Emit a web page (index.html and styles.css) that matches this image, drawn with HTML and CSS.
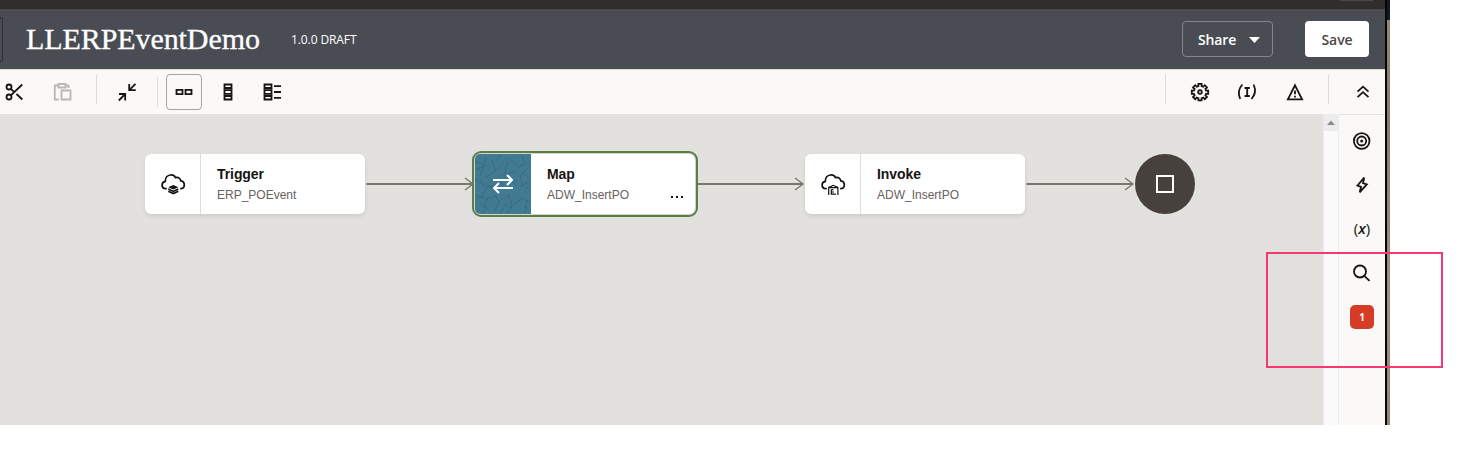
FILE: index.html
```html
<!DOCTYPE html>
<html lang="en">
<head>
<meta charset="utf-8">
<title>LLERPEventDemo</title>
<link rel="stylesheet" href="styles.css">
</head>
<body>
<div class="window">
  <div class="app">
    <div class="topstrip"><span class="topstrip-tab"></span></div>
    <header class="header">
      <span class="back"></span>
      <h1 class="title">LLERPEventDemo</h1>
      <span class="version">1.0.0 DRAFT</span>
      <button class="btn share">Share <svg width="11" height="6"><path d="M0 0h11L5.500 6z" fill="#fff"/></svg></button>
      <button class="btn save">Save</button>
    </header>
    <nav class="toolbar">
      <span class="tool cut"><svg class="ico" viewBox="0 0 24 24"><circle cx="7" cy="7" r="2.500"/><circle cx="7" cy="17" r="2.500"/><path d="M8.800 15.300 20.300 4.500M8.800 8.800l3 2.900M14.500 14l5.800 5.500"/></svg></span>
      <span class="tool paste"><svg class="ico muted" viewBox="0 0 24 24"><path d="M8.500 5.500H4.800v14h4M15.500 5.500h3v2.500M8.500 4h7v3.500h-7zM11.500 10.500h9v9h-9z"/></svg></span>
      <i class="divider d1"></i>
      <span class="tool collapse"><svg class="ico" viewBox="0 0 24 24"><path d="M20.500 3.800 14.200 10.100M14.200 4v6.200h6.500M3.800 20.500l6.300-6.300M4 14h6.200v6.500"/></svg></span>
      <i class="divider d2"></i>
      <span class="tool active"><svg class="ico" viewBox="0 0 24 24"><path d="M4.500 9.900h6v4.200h-6zM13.500 9.900h6v4.200h-6z"/></svg></span>
      <span class="tool gap8"><svg class="ico" viewBox="0 0 24 24"><path d="M8.500 4.500h7V8h-7zM8.500 10.200h7v3.600h-7zM8.500 16h7v3.500h-7z"/><path class="link" d="M8.500 8v2.200M15.500 8v2.200M8.500 13.800V16M15.500 13.800V16"/></svg></span>
      <span class="tool gap8"><svg class="ico" viewBox="0 0 24 24"><path d="M4.500 4.500h7V8h-7zM4.500 10.200h7v3.600h-7zM4.500 16h7v3.500h-7zM14 6.200h7M14 12h7M14 17.800h7"/><path class="link" d="M4.500 8v2.200M11.500 8v2.200M4.500 13.800V16M11.500 13.800V16"/></svg></span>
      <i class="divider d3"></i>
      <span class="tool gear"><svg class="ico" viewBox="0 0 24 24"><path d="M10.400 3.900h3.200v2.200l1.600.7 1.600-1.600 2.200 2.200-1.600 1.600.7 1.600h2.100v3.200h-2.100l-.7 1.600 1.600 1.600-2.200 2.200-1.600-1.600-1.600.7v2.100h-3.200v-2.100l-1.600-.7L7.200 19.200 5 17l1.600-1.600-.7-1.600H3.800v-3.200h2.100L6.600 9 5 7.400l2.200-2.200 1.600 1.600 1.600-.7z"/><circle cx="12" cy="12" r="1.800"/></svg></span>
      <span class="tool gap11"><svg class="ico" viewBox="0 0 24 24"><path d="M7.400 4.500C3.800 8.300 3 14 5.200 19M18.600 4.500c2.200 5 1.400 10.700-2.200 14.500M9.600 8h5.200M9.600 16h5.200M12.200 8v8"/></svg></span>
      <span class="tool gap12"><svg class="ico" viewBox="0 0 24 24"><path d="M12 5.300 19.100 19.300H4.900z"/><path d="M12 10.500v3.800M12 15.700v1.900" /></svg></span>
      <i class="divider d4"></i>
      <span class="tool chev"><svg class="ico" viewBox="0 0 24 24"><path d="m6.500 11.700 5.500-5 5.500 5M6.500 17.200l5.500-5 5.500 5"/></svg></span>
    </nav>
    <main class="body">
      <section class="canvas">
        <svg class="wires" width="1323" height="310" viewBox="0 114 1323 310">
          <g id="wire" fill="none" stroke="#7c756d"><path d="M366.500 184H472" stroke-width="2"/><path d="m465 178 8 6-8 6" stroke-width="1.300"/></g>
          <use href="#wire" x="330"/><use href="#wire" x="660"/>
        </svg>
        <article class="node trigger">
          <div class="node-icon"><svg class="cloud" viewBox="0 0 26 24"><path class="outline" d="M6.800 16.700H5.900C3.600 16.700 2.100 15 2.100 13s1.500-3.400 3.200-3.700C5.200 5.700 7.500 3.300 10.500 3c2.500-.2 4.200 1 5 2.600 3-.8 5 1 5.300 3.300 2.200.3 3.500 2 3.500 4 0 2.200-1.600 3.800-4.200 3.800"/><path fill="#111" d="m13.300 13 5 2.300-5 2.300-5-2.300z"/><path d="m8.300 17.100 5 2.300 5-2.300M8.300 19.300l5 2.300 5-2.300" fill="none" stroke="#111" stroke-width="1.600"/></svg></div>
          <div class="node-text"><b>Trigger</b><span>ERP_POEvent</span></div>
        </article>
        <article class="node map">
          <div class="node-icon">
            <svg class="map-art" viewBox="0 0 56 60">
              <g class="texture"><path d="m0 7 9 4 2-8m-2 8-4 10m11-16 5 12 8-8m-8 8-10 6m15-3 9 8m-3-20-2 13 11-4m-7-13 9 9 7-3m-4-10 4 10m4 3-9 9 3 11m-13-8 7 7m-37-6 6 8-5 10m5-10 12-3m-18 12-8 7M0 25l7 5m10 8 7 9 10-6m-10 6-5 12m15-18 3 11 11-8m-11 8-5 7m16-15 10 7m-6-5-2 13M0 41l12 4-4 14m4-14 10-3m7 11-4 7m25-25 5-3M26 1l-6 7m33 20-8 4"/><path d="m2 15 8-3m0 17 8 5m7-9 3 8m19-14 7 4M5 49l8 6m20-30 10 2m-14 23 8 4m12-3 5 5"/></g>
              <path fill="none" stroke="#fff" stroke-width="2" d="M18 26h18.500M32 21l5 5-5 5M38 34H19.500M24 29l-5 5 5 5"/>
            </svg>
          </div>
          <div class="node-text"><b>Map</b><span>ADW_InsertPO</span></div>
          <span class="dots"><i></i><i></i><i></i></span>
        </article>
        <article class="node invoke">
          <div class="node-icon"><svg class="cloud" viewBox="0 0 26 24"><path class="outline" d="M6.800 16.700H5.900C3.600 16.700 2.100 15 2.100 13s1.500-3.400 3.200-3.700C5.200 5.700 7.500 3.300 10.500 3c2.500-.2 4.200 1 5 2.600 3-.8 5 1 5.300 3.300 2.200.3 3.500 2 3.500 4 0 2.200-1.600 3.800-4.200 3.800"/><path fill="none" stroke="#111" stroke-width="1.200" d="M8.700 23v-7.500l4.600-2.200 4.600 2.200V23M8.700 15.700h9.200M11.300 17.500v4.700h4.600M11.300 20h2.700M11.300 17.700h2"/></svg></div>
          <div class="node-text"><b>Invoke</b><span>ADW_InsertPO</span></div>
        </article>
        <div class="stop"><i></i></div>
      </section>
      <div class="scroll"><span><svg width="8" height="5"><path d="m0 5 4-4.500L8 5z" fill="#8b8b8b"/></svg></span></div>
      <aside class="rail">
        <span class="rail-item"><svg class="ico" viewBox="0 0 24 24"><circle cx="11.700" cy="12" r="7.800"/><circle cx="11.700" cy="12" r="4.500"/><circle cx="11.700" cy="12" r="1.500" fill="#161513" stroke="none"/></svg></span>
        <span class="rail-item"><svg class="ico" viewBox="0 0 24 24"><path d="M14.200 4.700 7.500 12.500l3.600 1.300-1.400 5.500 7.100-7.900-3.800-1.200z"/></svg></span>
        <span class="rail-item fx">(<em>x</em>)</span>
        <span class="rail-item"><svg class="ico" viewBox="0 0 24 24"><circle cx="10" cy="10.500" r="6"/><path d="m14.300 14.800 5.200 5"/></svg></span>
        <span class="rail-item"><b class="badge">1</b></span>
      </aside>
    </main>
  </div>
  <div class="edge"></div>
</div>
<div class="highlight"></div>
</body>
</html>
```
FILE: styles.css
```css
* { box-sizing: border-box; }
body { margin: 0; width: 1484px; height: 466px; overflow: hidden; background: #fff; font-family: "Liberation Sans", Arial, sans-serif; position: relative; }
.window { display: flex; height: 425px; width: 1390px; }
.app { width: 1385px; display: flex; flex-direction: column; }
.topstrip { height: 9px; background: #312d2a; display: flex; justify-content: flex-end; }
.topstrip-tab { width: 33px; height: 1px; background: #4b4744; margin-right: 12px; }
.header { height: 60px; background: #4a4c54; display: flex; align-items: center; padding-right: 16px; color: #fff; }
.back { width: 3px; height: 45px; border: 1px solid #2e2f34; border-left: 0; border-radius: 0 4px 4px 0; }
.title { margin: 0 0 0 23px; width: 266px; font: 400 30px/36px "Liberation Serif", Georgia, serif; letter-spacing: -.08px; -webkit-text-stroke: .3px #fff; white-space: nowrap; }
.version { font: 500 12px/16px "Open Sans", sans-serif; white-space: nowrap; letter-spacing: -.1px; margin: 1px 0 0 -1px; }
.btn { height: 36px; border-radius: 4px; font: 600 14px/20px "Open Sans", sans-serif; letter-spacing: -.12px; display: flex; align-items: center; justify-content: center; padding: 2px 0 0; }
.share { margin-left: auto; width: 91px; gap: 13px; padding-left: 3px; background: none; border: 1px solid #85868b; color: #fff; }
.save { margin-left: 32px; width: 64px; background: #fff; border: 0; color: #4a4745; }
.toolbar { height: 46px; background: #faf9f7; border-top: 1px solid #dcdbd7; border-bottom: 1px solid #e6e4e1; display: flex; align-items: flex-start; padding: 4px 4px 0 0; }
.tool { width: 36px; height: 36px; flex: none; display: flex; align-items: center; justify-content: center; }
.ico { width: 24px; height: 24px; flex: none; fill: none; stroke: #161513; stroke-width: 1.8; }
.link { stroke-opacity: .4; }
.muted { stroke: #b9b7b4; }
.cut { margin-left: -4px; }
.paste { margin-left: 12px; }
.divider { width: 1px; height: 30px; background: #dddcd9; flex: none; }
.d1 { margin-left: 16px; }
.collapse { margin-left: 12px; }
.d2 { margin: 3px 8px 0 12px; }
.active { border: 1px solid #a5a3a0; border-radius: 4px; }
.gap8 { margin-left: 8px; }
.gap11 { margin-left: 11px; }
.gap12 { margin-left: 12px; }
.d3 { margin-left: auto; }
.gear { margin-left: 16px; }
.d4 { margin-left: 15px; }
.chev { margin-left: 16px; }
.body { flex: 1; display: flex; }
.canvas { width: 1323px; margin-top: -1px; padding-top: 1px; background: #e2e1dd; position: relative; }
.wires { display: block; margin-top: -1px; }
.node { position: absolute; top: 40px; width: 220px; height: 60px; display: flex; background: #fff; border-radius: 6px; box-shadow: 0 2px 4px rgba(0,0,0,.1); }
.trigger { left: 145px; }
.map { left: 475px; outline: 2px solid #5b7e49; outline-offset: 1px; box-shadow: 0 0 0 1px #d4d2cf; }
.invoke { left: 805px; }
.node-icon { width: 56px; border-right: 1px solid #dedddb; display: flex; align-items: center; justify-content: center; }
.map .node-icon { border: 0; background: #417a91; border-radius: 5px 0 0 5px; overflow: hidden; }
.map-art { width: 56px; height: 60px; }
.texture { fill: none; stroke: #315e73; stroke-opacity: .5; stroke-width: .9; }
.cloud { width: 26px; height: 24px; }
.outline { fill: none; stroke: #111; stroke-width: 1.7; }
.node-text { padding: 12px 0 0 16px; display: flex; flex-direction: column; gap: 5px; }
.node-text b { font-size: 14px; line-height: 17px; color: #161513; letter-spacing: -.08px; }
.node-text span { font-size: 12px; line-height: 15px; color: #66625e; white-space: nowrap; }
.dots { display: flex; gap: 3px; margin: 42px 12px 0 auto; }
.dots i { width: 2px; height: 2px; background: #161513; }
.stop { position: absolute; left: 1135px; top: 40px; width: 60px; height: 60px; border-radius: 50%; background: #47413d; display: flex; align-items: center; justify-content: center; }
.stop i { width: 18px; height: 18px; border: 2px solid #fff; }
.scroll { width: 16px; background: #fafafa; border: solid #ecebeb; border-width: 0 1px; margin-top: -1px; }
.scroll span { height: 17px; background: #ececec; display: flex; align-items: center; justify-content: center; }
.rail { width: 46px; background: #faf9f7; padding-top: 4px; }
.rail-item { height: 44px; display: flex; align-items: center; justify-content: center; }
.fx { font: 500 15px/20px "Open Sans", sans-serif; color: #161513; padding-bottom: 3px; }
.fx em { font-weight: 600; }
.badge { width: 24px; height: 24px; background: #d63b25; color: #fff; border-radius: 5px; font: 700 10px/24px "Open Sans", sans-serif; text-align: center; }
.edge { width: 5px; border-left: 2px solid #050505; background: linear-gradient(#111a2b 20px, #958674 20px, #8b7b69 120px, #a08f7b 300px, #958470); }
.highlight { position: absolute; left: 1266px; top: 252px; width: 177px; height: 116px; border: 2px solid #f53a73; }
```
